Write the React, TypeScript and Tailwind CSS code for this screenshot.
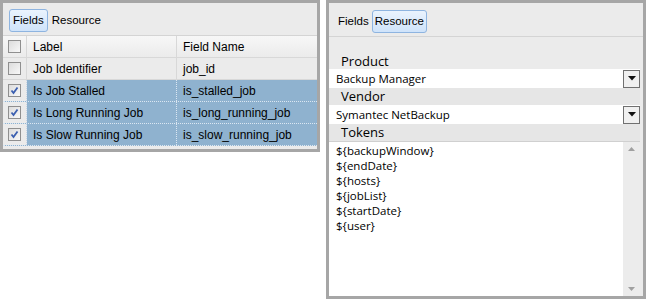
import React from "react";

const tahoma = { fontFamily: '"Liberation Sans", Arial, sans-serif' };
const segoe = { fontFamily: '"Open Sans", "Noto Sans", sans-serif' };

function Check({ checked }: { checked?: boolean }) {
  return (
    <div className="w-[13px] h-[13px] border border-[#8f8f8f] bg-gradient-to-br from-[#dcdcdc] to-[#f8f8f8] flex items-center justify-center">
      {checked && (
        <svg width="9" height="9" viewBox="0 0 9 9">
          <path d="M1.5 4.5 L3.5 7 L7.5 1.5" fill="none" stroke="#3b5fb0" strokeWidth="1.8" />
        </svg>
      )}
    </div>
  );
}

function Arrow() {
  return (
    <div className="w-[17px] h-[18px] border border-[#707070] bg-[#f0f0f0] flex items-center justify-center">
      <svg width="8" height="5" viewBox="0 0 8 5">
        <path d="M0 0 H8 L4 4.5 Z" fill="#111" />
      </svg>
    </div>
  );
}

const rows = [
  { label: "Job Identifier", field: "job_id", sel: false },
  { label: "Is Job Stalled", field: "is_stalled_job", sel: true },
  { label: "Is Long Running Job", field: "is_long_running_job", sel: true },
  { label: "Is Slow Running Job", field: "is_slow_running_job", sel: true },
];

export default function App() {
  return (
    <div className="w-[648px] h-[299px] bg-white flex items-start text-black" style={tahoma}>
      {/* Left panel */}
      <div className="w-[320px] h-[152px] border-[3px] border-[#a6a6a6] bg-[#ebebeb] flex flex-col">
        <div className="h-[33px] border-b border-[#d4d4d4] flex items-start pt-[6px] gap-[4px] pl-[6px] text-[11.5px]">
          <div className="h-[23px] px-[3px] rounded-[3px] border border-[#8eb4e0] bg-gradient-to-b from-[#eaf3fd] to-[#cfe3fa] flex items-center">
            Fields
          </div>
          <div className="h-[23px] flex items-center">Resource</div>
        </div>
        <div className="flex flex-col">
          <div className="h-[22px] flex bg-gradient-to-b from-[#f7f7f7] to-[#ebebeb] border-b border-[#d8d8d8] text-[12px]">
            <div className="w-[24px] flex items-center justify-center border-r border-[#d8d8d8]">
              <Check />
            </div>
            <div className="w-[150px] flex items-center pl-[6px] border-r border-[#d8d8d8]">Label</div>
            <div className="flex-1 flex items-center pl-[6px]">Field Name</div>
          </div>
          {rows.map((r) => (
            <div
              key={r.label}
              className={
                "h-[22px] flex text-[12px] border-b " +
                (r.sel ? "bg-[#8fb2cf] border-dotted border-[#dbe7f2]" : "bg-[#ebebeb] border-[#d8d8d8]")
              }
            >
              <div
                className={
                  "w-[24px] flex items-center justify-center border-r " +
                  (r.sel ? "bg-[#ebebeb] border-dotted border-[#c8d6e6]" : "border-[#d8d8d8]")
                }
              >
                <Check checked={r.sel} />
              </div>
              <div
                className={
                  "w-[150px] flex items-center pl-[6px] border-r " +
                  (r.sel ? "border-dotted border-[#dbe7f2]" : "border-[#d8d8d8]")
                }
              >
                {r.label}
              </div>
              <div className="flex-1 flex items-center pl-[6px]">{r.field}</div>
            </div>
          ))}
        </div>
      </div>

      {/* Right panel */}
      <div className="ml-[6px] w-[320px] h-[299px] border-[3px] border-[#a6a6a6] bg-[#ebebeb] flex flex-col">
        <div className="h-[34px] border-b border-[#d4d4d4] flex items-start pt-[7px] gap-[3px] pl-[9px] text-[11.5px]">
          <div className="h-[23px] flex items-center">Fields</div>
          <div className="h-[23px] px-[2px] rounded-[3px] border border-[#8eb4e0] bg-gradient-to-b from-[#eaf3fd] to-[#cfe3fa] flex items-center">
            Resource
          </div>
        </div>
        <div className="flex-1 flex flex-col pt-[16px] pr-[3px]" style={segoe}>
          <div className="h-[16px] pl-[12px] text-[13px] leading-[16px]">Product</div>
          <div className="h-[19px] bg-white flex items-center justify-between pl-[7px] text-[11.5px]">
            <span>Backup Manager</span>
            <Arrow />
          </div>
          <div className="h-[17px] pl-[12px] text-[13px] leading-[17px] bg-[#e6e6e6]">Vendor</div>
          <div className="h-[19px] bg-white flex items-center justify-between pl-[7px] text-[11.5px]">
            <span>Symantec NetBackup</span>
            <Arrow />
          </div>
          <div className="h-[17px] pl-[12px] text-[13px] leading-[17px] bg-[#e6e6e6]">Tokens</div>
          <div className="flex-1 bg-white flex border-t border-[#d0d0d0]">
            <div className="flex-1 pl-[7px] pt-[1px] text-[11.5px] leading-[15px]">
              <div>{"${backupWindow}"}</div>
              <div>{"${endDate}"}</div>
              <div>{"${hosts}"}</div>
              <div>{"${jobList}"}</div>
              <div>{"${startDate}"}</div>
              <div>{"${user}"}</div>
            </div>
            <div className="w-[17px] bg-[#ececec] flex flex-col justify-between items-center py-[5px]">
              <svg width="7" height="4" viewBox="0 0 7 4"><path d="M0 4 H7 L3.5 0 Z" fill="#a0a0a0" /></svg>
              <svg width="7" height="4" viewBox="0 0 7 4"><path d="M0 0 H7 L3.5 4 Z" fill="#a0a0a0" /></svg>
            </div>
          </div>
        </div>
      </div>
    </div>
  );
}
